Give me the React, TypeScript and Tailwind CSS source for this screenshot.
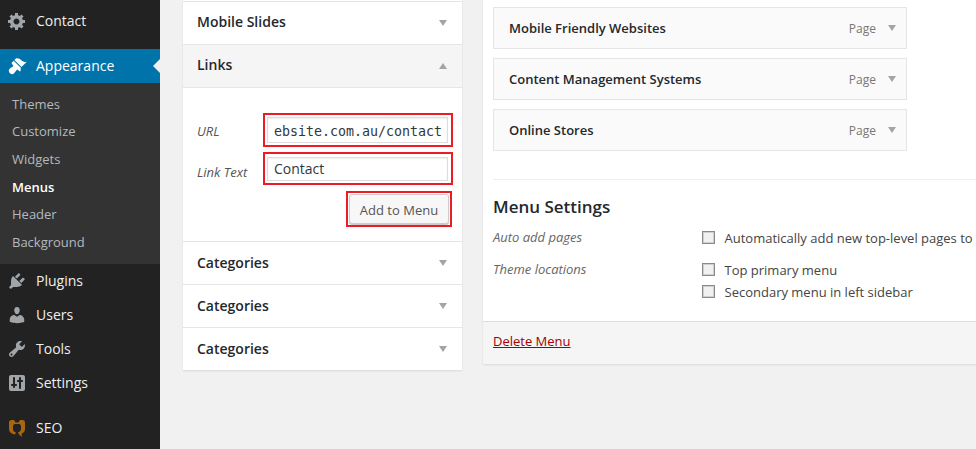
const SUBMENU = ["Themes", "Customize", "Widgets", "Menus", "Header", "Background"];
const PAGES = ["Mobile Friendly Websites", "Content Management Systems", "Online Stores"];

function GearIcon() {
  return (
    <svg viewBox="0 0 20 20" className="h-5 w-5 fill-[#a0a5aa]">
      <path
        fillRule="evenodd"
        d="M18 12h-2.180c-.17.7-.44 1.350-.81 1.930l1.540 1.540-2.100 2.100-1.540-1.540c-.58.36-1.230.63-1.910.79V19H8v-2.180c-.68-.16-1.330-.43-1.910-.79l-1.540 1.540-2.120-2.120 1.540-1.540c-.36-.58-.63-1.230-.79-1.910H1V9.030h2.170c.16-.7.44-1.350.8-1.940L2.430 5.550l2.100-2.100 1.540 1.540c.58-.37 1.240-.64 1.930-.81V2h3v2.180c.68.16 1.330.43 1.910.79l1.540-1.540 2.120 2.120-1.540 1.540c.36.59.64 1.240.8 1.940H18V12zm-8.500 1.500c1.660 0 3-1.340 3-3s-1.340-3-3-3-3 1.340-3 3 1.340 3 3 3z"
      />
    </svg>
  );
}

function BrushIcon() {
  return (
    <svg viewBox="0 0 20 20" className="h-5 w-5 fill-white">
      <path d="M14.480 11.060L7.410 3.990l1.500-1.500c.5-.56 2.300-.47 3.510.32 1.210.8 1.430 1.280 2.910 2.100 1.180.64 2.450 1.260 4.450.85zm-.71.71L6.700 4.700 4.930 6.470c-.39.39-.39 1.020 0 1.410l1.060 1.060c.39.39.39 1.030 0 1.420-.6.6-3.600 2.500-4 3.500-.5 1.300.1 2.500 1 3.300.9.9 2 1.300 3.200.9 1-.4 2.900-3.400 3.500-4 .39-.39 1.030-.39 1.420 0l1.060 1.060c.39.39 1.020.39 1.410 0z" />
    </svg>
  );
}

function PluginIcon() {
  return (
    <svg viewBox="0 0 20 20" className="h-5 w-5 fill-[#a0a5aa]">
      <path d="M13.110 4.360L9.870 7.600 8 5.730l3.240-3.240c.35-.34 1.050-.2 1.560.32.52.51.66 1.210.31 1.550zm-8 1.770l.91-1.120 9.010 9.010-1.190.84c-.71.71-2.630 1.160-3.820 1.160H6.140L4.900 17.260c-.59.59-1.540.59-2.120 0-.59-.58-.59-1.530 0-2.120l1.240-1.240v-3.880c0-1.130.4-3.190 1.090-3.890zm7.260 3.970l3.240-3.240c.34-.35 1.040-.21 1.550.31.52.51.66 1.210.31 1.550l-3.240 3.250z" />
    </svg>
  );
}

function UserIcon() {
  return (
    <svg viewBox="0 0 20 20" className="h-5 w-5 fill-[#a0a5aa]">
      <path d="M10 9.250c-2.270 0-2.730-3.440-2.730-3.440C7 4.020 7.820 2 9.970 2c2.160 0 2.980 2.020 2.710 3.810 0 0-.41 3.440-2.680 3.440zm0 2.570L12.720 10c2.390 0 4.520 2.330 4.520 4.530v2.490s-3.650 1.130-7.240 1.130c-3.650 0-7.240-1.130-7.240-1.130v-2.490c0-2.250 1.940-4.480 4.470-4.480z" />
    </svg>
  );
}

function ToolsIcon() {
  return (
    <svg viewBox="0 0 20 20" className="h-5 w-5 fill-[#a0a5aa]">
      <path d="M16.680 9.770c-1.340 1.340-3.300 1.670-4.950.99l-5.410 6.520c-.99.99-2.590.99-3.580 0s-.99-2.590 0-3.570l6.520-5.420c-.68-1.650-.35-3.610.99-4.950 1.280-1.280 3.120-1.620 4.720-1.060l-2.890 2.890 2.820 2.820 2.860-2.870c.53 1.580.18 3.390-1.080 4.650zM3.810 16.210c.4.39 1.040.39 1.430 0 .4-.4.4-1.040 0-1.430-.39-.4-1.030-.4-1.430 0-.39.39-.39 1.030 0 1.430z" />
    </svg>
  );
}

function SettingsIcon() {
  return (
    <svg viewBox="0 0 20 20" className="h-5 w-5 fill-[#a0a5aa]">
      <path
        fillRule="evenodd"
        d="M18 16V4c0-1.100-.9-2-2-2H4c-1.100 0-2 .9-2 2v12c0 1.100.9 2 2 2h12c1.100 0 2-.9 2-2zM8 11h1c.55 0 1 .45 1 1s-.45 1-1 1H8v1c0 .55-.45 1-1 1s-1-.45-1-1v-1H5c-.55 0-1-.45-1-1s.45-1 1-1h1V5c0-.55.45-1 1-1s1 .45 1 1v6zm7-2h-1v6c0 .55-.45 1-1 1s-1-.45-1-1V9h-1c-.55 0-1-.45-1-1s.45-1 1-1h1V5c0-.55.45-1 1-1s1 .45 1 1v2h1c.55 0 1 .45 1 1s-.45 1-1 1z"
      />
    </svg>
  );
}

function SeoIcon() {
  return (
    <svg viewBox="0 0 20 20" className="h-5 w-5 fill-[#a8660f]">
      <path d="M2 4.500C2 3 3 2 4.500 2H7l1.500 2.500h3L13 2h2.500C17 2 18 3 18 4.500V11c0 2.500-1.500 4-3.500 4.800L15 19l-3-2.500-1-2.200c1.500-.3 3-1.300 3-3.300V7.500L12.500 6h-5L6 7.500V11c0 1.800 1 3 3 3.500L8 16.500C4.500 16 2 14 2 11V4.500z" />
    </svg>
  );
}

function MenuItem({ icon, label }: { icon: React.ReactNode; label: string }) {
  return (
    <div className="flex h-[34px] items-center text-sm text-[#eeeeee]">
      <span className="flex w-[36px] justify-center pr-[2px]">{icon}</span>
      {label}
    </div>
  );
}

function Caret({ up }: { up?: boolean }) {
  return (
    <svg viewBox="0 0 8 6" className="h-[6px] w-[8px] fill-[#a0a5aa]">
      <path d={up ? "M4 0l4 6H0z" : "M0 0h8L4 6z"} />
    </svg>
  );
}

function AccordionRow({ title, raised }: { title: string; raised?: boolean }) {
  return (
    <div className="flex h-[43px] items-center justify-between border-b border-[#e5e5e5] pl-[14px] pr-[15px] text-sm font-semibold text-[#23282d]">
      <span className={raised ? "pb-[2px]" : ""}>{title}</span>
      <Caret />
    </div>
  );
}

function Check() {
  return <span className="mt-px h-[13px] w-[13px] shrink-0 border border-[#8a8a8a] bg-[#f1f1f1] shadow-[inset_0_0_0_1px_#cfcfcf]" />;
}

export default function App() {
  return (
    <div className="flex h-[449px] w-[976px] overflow-hidden bg-[#f1f1f1] font-['Open_Sans',sans-serif] text-[13px] text-[#444444]">
      <aside className="w-[160px] shrink-0 bg-[#222222] pt-[4px]">
        <MenuItem icon={<GearIcon />} label="Contact" />
        <div className="relative mt-[11px] flex h-[34px] items-center bg-[#0073aa] text-sm text-white">
          <span className="flex w-[36px] justify-center pr-[2px]"><BrushIcon /></span>
          Appearance
          <span className="absolute right-0 top-[10px] h-0 w-0 border-y-[7px] border-r-[7px] border-y-transparent border-r-[#f1f1f1]" />
        </div>
        <div className="flex h-[181px] flex-col bg-[#333333] pl-[12px] pt-[7.500px]">
          {SUBMENU.map((item) => (
            <div
              key={item}
              className={`flex h-[27.700px] items-center ${item === "Menus" ? "font-semibold text-white" : "text-[#b4b9be]"}`}
            >
              {item}
            </div>
          ))}
        </div>
        <MenuItem icon={<PluginIcon />} label="Plugins" />
        <MenuItem icon={<UserIcon />} label="Users" />
        <MenuItem icon={<ToolsIcon />} label="Tools" />
        <MenuItem icon={<SettingsIcon />} label="Settings" />
        <div className="mt-[11px]">
          <MenuItem icon={<SeoIcon />} label="SEO" />
        </div>
      </aside>

      <main className="flex flex-1 items-start pl-[23px]">
        <section className="w-[279px] bg-white pt-px shadow-[0_1px_2px_rgba(0,0,0,0.1)]">
          <div className="border-t border-[#e5e5e5]">
            <AccordionRow title="Mobile Slides" raised />
          </div>
          <div className="flex h-[43px] items-center justify-between border-b border-[#e5e5e5] bg-[#f5f5f5] pl-[14px] pr-[15px] text-sm font-semibold text-[#23282d]">
            <span className="pb-[2px]">Links</span>
            <Caret up />
          </div>
          <div className="h-[154px] border-b border-[#e5e5e5] pl-[14px] pt-[25px]">
            <div className="flex items-center">
              <span className="w-[66px] pt-[4px] italic text-[#555555]">URL</span>
              <div className="border-2 border-[#ed1c24] p-[2px] pr-[3px]">
                <div className="flex h-[26px] w-[181px] items-center overflow-hidden whitespace-nowrap border border-[#dddddd] pl-[6px] pt-[3px] font-['DejaVu_Sans_Mono',monospace] text-[13.300px] text-[#32373c] shadow-[inset_0_1px_2px_rgba(0,0,0,0.07)]">
                  ebsite.com.au/contact
                </div>
              </div>
            </div>
            <div className="mt-[5px] flex items-center">
              <span className="w-[66px] pt-[8px] italic text-[#555555]">Link Text</span>
              <div className="border-2 border-[#ed1c24] px-[2px] pb-[2px] pt-[3px] pr-[3px]">
                <div className="flex h-[24px] w-[181px] items-center border border-[#dddddd] pl-[6px] text-sm text-[#32373c] shadow-[inset_0_1px_2px_rgba(0,0,0,0.07)]">
                  Contact
                </div>
              </div>
            </div>
            <div className="mt-[6px] flex justify-end pr-[10px]">
              <div className="border-2 border-[#ed1c24] p-px">
                <div className="flex h-[30px] w-[100px] items-center justify-center rounded-[3px] border border-[#cccccc] bg-[#f7f7f7] pt-[3px] text-[#555555] shadow-[0_1px_0_#cccccc]">
                  Add to Menu
                </div>
              </div>
            </div>
          </div>
          <AccordionRow title="Categories" />
          <AccordionRow title="Categories" />
          <div className="flex h-[42px] items-center justify-between pl-[14px] pr-[15px] text-sm font-semibold text-[#23282d]">
            Categories
            <Caret />
          </div>
        </section>

        <section className="ml-[21px] h-[364px] flex-1 bg-white shadow-[0_1px_2px_rgba(0,0,0,0.1)]">
          <div className="h-[321px] pl-[10px] pt-[7px]">
            <div className="flex flex-col gap-[9px]">
              {PAGES.map((page) => (
                <div
                  key={page}
                  className="flex h-[42px] w-[414px] items-center border border-[#e5e5e5] bg-[#fafafa] pl-[15px] pr-[10px] font-semibold text-[#23282d]"
                >
                  <span className="flex-1 pt-[2px]">{page}</span>
                  <span className="mr-[12px] pt-[2px] text-xs font-normal text-[#777777]">Page</span>
                  <Caret />
                </div>
              ))}
            </div>
            <div className="mt-[28px] border-t border-[#eeeeee] pt-[16px]">
              <h3 className="text-[17px] font-semibold leading-[22px] text-[#23282d]">Menu Settings</h3>
              <div className="mt-[10px] flex h-[32px]">
                <span className="w-[209px] italic text-[#666666]">Auto add pages</span>
                <div className="flex h-[18px] items-start gap-[9.500px] whitespace-nowrap pt-[2px]">
                  <Check />
                  <span className="leading-[16px]">Automatically add new top-level pages to</span>
                </div>
              </div>
              <div className="flex">
                <span className="w-[209px] italic text-[#666666]">Theme locations</span>
                <div className="flex flex-col gap-[4px] pt-[2px]">
                  <div className="flex h-[18px] items-start gap-[9.500px]"><Check /><span className="leading-[16px]">Top primary menu</span></div>
                  <div className="flex h-[18px] items-start gap-[9.500px]"><Check /><span className="leading-[16px]">Secondary menu in left sidebar</span></div>
                </div>
              </div>
            </div>
          </div>
          <div className="flex h-[43px] items-center border-t border-[#dddddd] bg-[#f5f5f5] pb-[2px] pl-[10px]">
            <a className="text-[#a00000] underline">Delete Menu</a>
          </div>
        </section>
      </main>
    </div>
  );
}
